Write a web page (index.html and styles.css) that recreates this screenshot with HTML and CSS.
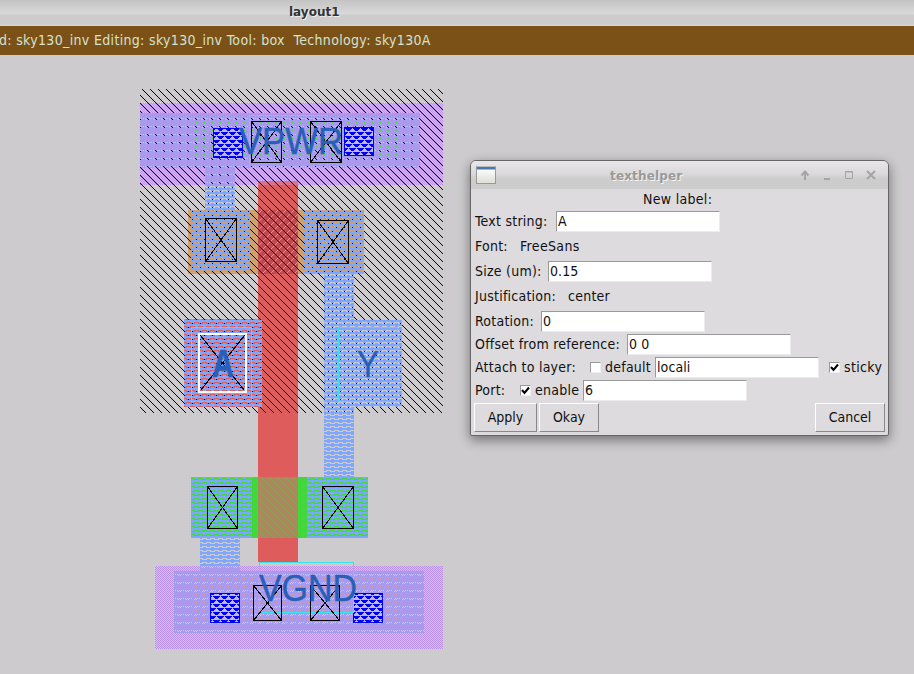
FILE: index.html
```html
<!DOCTYPE html>
<html lang="en">
<head>
<meta charset="utf-8">
<title>layout1</title>
<link rel="stylesheet" href="styles.css">
</head>
<body>
<header class="titlebar">layout1</header>
<div class="status">d: sky130_inv Editing: sky130_inv Tool: box&nbsp; Technology: sky130A</div>
<main class="canvas">
<svg class="layout" width="914" height="619" viewBox="0 55 914 619" shape-rendering="crispEdges">
  <defs>
    <pattern id="well" width="8" height="8" patternUnits="userSpaceOnUse" patternTransform="translate(5 0)"><path fill="#000" d="M0 0h1v1H0zM1 1h1v1H1zM2 2h1v1H2zM3 3h1v1H3zM4 4h1v1H4zM5 5h1v1H5zM6 6h1v1H6zM7 7h1v1H7z"/></pattern>
    <pattern id="metal" width="2" height="2" patternUnits="userSpaceOnUse"><path fill="#b990e3" d="M0 0h1v1H0zM1 1h1v1H1z"/></pattern>
    <pattern id="li" width="8" height="8" patternUnits="userSpaceOnUse"><path fill="#7da6ff" d="M0 0h8v2H0zM0 2h2v1H0zM7 2h1v1H7zM3 3h3v1H3zM0 4h8v2H0zM3 6h3v1H3zM0 7h2v1H0zM7 7h1v1H7z"/></pattern>
    <pattern id="limetal" width="8" height="8" patternUnits="userSpaceOnUse"><path fill="#a69bec" d="M0 0h8v2H0zM0 2h2v1H0zM3 2h1v1H3zM5 2h3v1H5zM0 3h1v1H0zM2 3h1v1H2zM4 3h1v1H4zM6 3h1v1H6zM0 4h8v2H0zM0 6h1v1H0zM2 6h1v1H2zM4 6h1v1H4zM6 6h1v1H6zM0 7h2v1H0zM3 7h1v1H3zM5 7h3v1H5z"/></pattern>
    <pattern id="greendot" width="8" height="8" patternUnits="userSpaceOnUse"><path fill="#42d83c" d="M4 2h1v1H4zM1 6h1v1H1z"/></pattern>
    <pattern id="orangedot" width="8" height="8" patternUnits="userSpaceOnUse"><path fill="#dc9c7d" d="M4 2h1v1H4zM1 6h1v1H1zM1 3h1v1H1z"/></pattern>
    <pattern id="pgate" width="8" height="8" patternUnits="userSpaceOnUse"><path fill="#cfa16f" d="M7 0h1v1H7zM6 1h1v1H6zM5 2h1v1H5zM4 3h1v1H4zM3 4h1v1H3zM2 5h1v1H2zM1 6h1v1H1zM0 7h1v1H0z"/></pattern>
    <pattern id="ngate" width="8" height="8" patternUnits="userSpaceOnUse"><path fill="#42d83c" opacity=".45" d="M0 0h1v1H0zM1 1h1v1H1zM2 2h1v1H2zM3 3h1v1H3zM4 4h1v1H4zM5 5h1v1H5zM6 6h1v1H6zM7 7h1v1H7z"/></pattern>
    <pattern id="via" width="8" height="8" patternUnits="userSpaceOnUse"><path fill="#00f" d="M1 0h7v1H1zM2 1h5v1H2zM3 2h3v1H3zM0 4h4v1H0zM5 4h3v1H5zM0 5h3v1H0zM6 5h2v1H6zM0 6h2v1H0zM7 6h1v1H7z"/></pattern>
  </defs>

  <!-- metal rails -->
  <path fill="url(#metal)" d="M140 103h303v82H140zM155 566h288v83H155z"/>
  <!-- diffusion -->
  <path fill="#cfa16f" d="M188 210h176v64H188z"/>
  <path fill="#42d83c" d="M191 477h177v61H191z"/>
  <!-- poly -->
  <path fill="#df5c5c" d="M258 185h40v377h-40zM184 319h78v88h-78z"/>
  <path fill="#df5c5c" opacity=".7" d="M258 181h40v4h-40z"/>
  <path fill="#bf4a52" d="M258 210h40v64h-40z"/>
  <path fill="url(#pgate)" d="M258 210h40v64h-40z"/>
  <path fill="#b08560" d="M258 477h40v61h-40z"/>
  <path fill="url(#ngate)" d="M258 477h40v61h-40z"/>
  <path fill="url(#well)" d="M140 89h303v324H140z"/>
  <!-- local interconnect -->
  <path fill="url(#li)" d="M205 185h30v25h-30zM191 210h59v62h-59zM304 210h60v63h-60zM324 273h30v47h-30zM324 320h78v87h-78zM324 407h30v70h-30zM184 319h78v88h-78zM191 477h61v61h-61zM307 477h61v61h-61zM200 538h40v28h-40z"/>
  <path fill="url(#limetal)" d="M140 113h280v55H140zM205 168h30v17h-30zM174 571h250v62H174zM200 566h40v5h-40z"/>
  <path fill="url(#greendot)" d="M195 119h203v42H195z"/>
  <path fill="url(#orangedot)" d="M190 578h214v46H190z"/>

  <!-- vias -->
  <g class="via">
    <path class="via-bg" d="M213 128h30v30h-30zM344 127h30v29h-30zM210 593h30v30h-30zM353 593h30v30h-30z"/>
    <path fill="url(#via)" stroke="#00f" d="M213.5 128.5h29v29h-29zM344.5 127.5h29v28h-29zM210.5 593.5h29v29h-29zM353.5 593.5h29v29h-29z"/>
  </g>

  <!-- label boxes -->
  <path class="cyan" d="M249.500 115.500h78v52h-78zM191.500 327.500h60v74h-60zM338.500 327.500h59v74h-59zM259.500 562.500h94v50h-94z"/>

  <!-- contacts -->
  <g class="cut">
    <path d="M251.500 121.500h30v41h-30zl30 41m0-41l-30 41"/>
    <path d="M310.500 121.500h31v41h-31zl31 41m0-41l-31 41"/>
    <path d="M205.500 218.500h31v43h-31zl31 43m0-43l-31 43"/>
    <path d="M317.500 220.500h31v43h-31zl31 43m0-43l-31 43"/>
    <path d="M200.500 335.500l44 55m0-55l-44 55"/>
    <path d="M207.500 486.500h30v42h-30zl30 42m0-42l-30 42"/>
    <path d="M322.500 486.500h31v42h-31zl31 42m0-42l-31 42"/>
    <path d="M253.500 585.500h28v35h-28zl28 35m0-35l-28 35"/>
    <path d="M310.500 585.500h29v35h-29zl29 35m0-35l-29 35"/>
  </g>
  <path class="cursor" d="M199 334h47v58h-47z"/>

  <g class="net">
    <text x="239" y="154" textLength="104" lengthAdjust="spacingAndGlyphs">VPWR</text>
    <text class="bold" x="212" y="377" textLength="22" lengthAdjust="spacingAndGlyphs">A</text>
    <text x="357" y="377" textLength="22" lengthAdjust="spacingAndGlyphs">Y</text>
    <text x="259" y="601" textLength="98" lengthAdjust="spacingAndGlyphs">VGND</text>
  </g>
</svg>

<section class="dialog">
  <div class="dialog-title">
    <span class="app-icon"></span>
    <span class="caption">texthelper</span>
    <svg class="controls" width="78" height="12" viewBox="0 0 78 12">
      <path d="M5 11V3M1.500 6.500L5 2.500l3.500 4" stroke-width="2"/>
      <path d="M24 10h6" stroke-width="2"/>
      <path d="M45.500 2.500h7v7h-7zM45 3h8" stroke-width="1"/>
      <path d="M67 2l8 8m0-8l-8 8" stroke-width="2"/>
    </svg>
  </div>
  <div class="heading">New label:</div>
  <div class="row"><label class="w-text">Text string:</label><input value="A"></div>
  <div class="row tall"><label class="w-font">Font:</label><span class="value">FreeSans</span></div>
  <div class="row"><label class="w-size">Size (um):</label><input value="0.15"></div>
  <div class="row tall"><label class="w-just">Justification:</label><span>center</span></div>
  <div class="row"><label class="w-rot">Rotation:</label><input value="0"></div>
  <div class="row"><label class="w-off">Offset from reference:</label><input value="0 0"></div>
  <div class="row"><label class="w-layer">Attach to layer:</label><i class="check"></i><span class="w-default">default</span><input value="locali"><i class="check sticky"><svg width="9" height="9" viewBox="0 0 9 9"><path d="M1 4l2.500 3L8 1.500"/></svg></i><span class="value">sticky</span></div>
  <div class="row"><label class="w-port">Port:</label><i class="check"><svg width="9" height="9" viewBox="0 0 9 9"><path d="M1 4l2.500 3L8 1.500"/></svg></i><span class="w-enable">enable</span><input value="6"></div>
  <div class="buttons"><button class="apply">Apply</button><button class="okay">Okay</button><button class="cancel">Cancel</button></div>
</section>
</main>
</body>
</html>
```
FILE: styles.css
```css
* { box-sizing: border-box; }
body {
  margin: 0;
  width: 914px;
  height: 674px;
  overflow: hidden;
  background: #cdcbcd;
  font: 14px/20px "DejaVu Sans Condensed", "DejaVu Sans", sans-serif;
  font-stretch: condensed;
  color: #111;
}
.titlebar {
  height: 26px;
  padding-left: 289px;
  border-bottom: 1px solid #d8d8da;
  background: linear-gradient(#c4c4c4, #dad9da 55%, #cdcccd 60%, #cdcccd);
  font: bold 12px/24px "DejaVu Sans", sans-serif;
  color: #333;
  text-shadow: 1px 1px #eee;
}
.status {
  height: 29px;
  margin-left: -1px;
  background: #7c5117;
  color: #d2e3d0;
  letter-spacing: .33px;
  line-height: 29px;
  white-space: pre;
}
.canvas { position: relative; height: 619px; }
.layout { display: block; }
.via-bg { fill: #b9b5f0; }
.cyan { fill: none; stroke: #36e4ee; }
.cut { fill: none; stroke: #000; }
.cursor { fill: none; stroke: #fff; stroke-width: 2; }
.net { font: 36px "Liberation Sans", sans-serif; fill: #285fb8; stroke: #285fb8; stroke-width: .4; }
.bold { font-weight: bold; font-size: 38px; }

.dialog {
  position: absolute;
  left: 470px;
  top: 105px;
  width: 419px;
  height: 276px;
  border: 1px solid #666;
  border-radius: 6px 6px 2px 2px;
  background: #dddbde;
  box-shadow: 0 4px 12px rgba(0, 0, 0, .45);
}
.dialog-title {
  display: flex;
  align-items: center;
  height: 28px;
  padding: 0 10px 0 5px;
  border-radius: 5px 5px 0 0;
  background: linear-gradient(#e9e6e9, #dadada 45%, #cdcccd 65%, #cdcccd);
}
.app-icon {
  width: 20px;
  height: 18px;
  border: 1px solid #999;
  border-top-color: #bbb;
  background: linear-gradient(#4778b4 2px, #fafafa 3px, #dedfd6);
}
.caption {
  margin-left: 114px;
  padding-top: 2px;
  font: bold 12px/20px "DejaVu Sans", sans-serif;
  letter-spacing: .15px;
  color: #999;
  text-shadow: 1px 1px #f3f3f3;
}
.controls { flex: none; margin-left: auto; fill: none; stroke: #a5a5a5; }
.heading { height: 21px; padding-left: 172px; line-height: 20px; letter-spacing: .3px; }
.row { display: flex; align-items: center; height: 23px; padding-left: 4px; white-space: nowrap; }
.row label, .row span { flex: none; padding-bottom: 2px; letter-spacing: .24px; }
.row .value { letter-spacing: .35px; }
.tall { height: 27px; }
input {
  width: 164px;
  height: 21px;
  padding: 0 1px 2px;
  border: 1px solid #ececee;
  border-top-color: #999;
  border-left-color: #999;
  border-radius: 0;
  background: #fff;
  color: #111;
  font: inherit;
  letter-spacing: .1px;
}
.w-text { width: 81px; }
.w-font { width: 45px; }
.w-size { width: 73px; }
.w-just { width: 93px; }
.w-rot { width: 66px; }
.w-off { width: 152px; }
.w-layer { width: 115px; }
.w-port { width: 45px; }
.w-default { width: 50px; }
.w-enable { width: 48px; }
.check {
  display: flex;
  width: 11px;
  height: 11px;
  margin-right: 4px;
  border: 1px solid #eee;
  border-top-color: #999;
  border-left-color: #999;
  background: #fff;
}
.check svg { fill: none; stroke: #000; stroke-width: 2; }
.sticky { margin-left: 10px; }
.buttons { display: flex; gap: 2px; padding: 1px 3px 0; }
button {
  height: 29px;
  padding: 0 0 2px;
  border: 1px solid #fff;
  border-right-color: #888;
  border-bottom-color: #888;
  background: #dddbde;
  color: #111;
  font: inherit;
}
.apply { width: 63px; }
.okay { width: 60px; }
.cancel { width: 70px; margin-left: auto; }
```
